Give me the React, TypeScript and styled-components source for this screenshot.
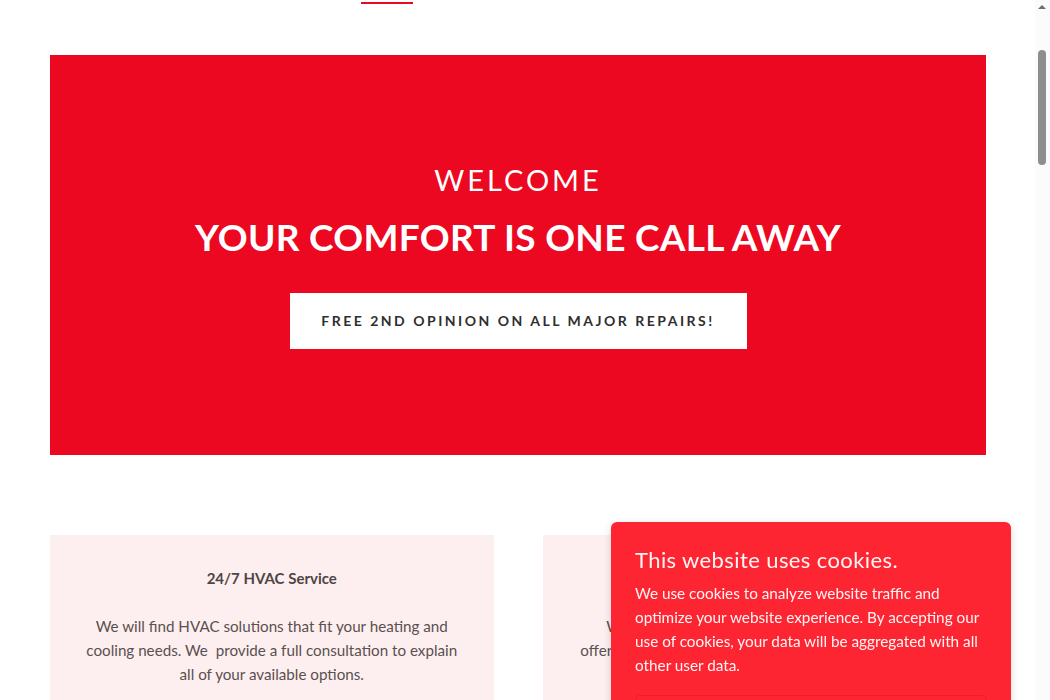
import React, { useLayoutEffect } from "react";
import styled, { createGlobalStyle } from "styled-components";

const Global = createGlobalStyle`
  html, body { margin: 0; padding: 0; background: #ffffff; }
  body { font-family: Lato, "Open Sans", sans-serif; color: #4a4040; padding-right: 15px; }
  * { box-sizing: border-box; }
`;

const ScrollTrack = styled.div`
  position: fixed;
  top: 0;
  right: 0;
  width: 15px;
  height: 100vh;
  background: #fbfbfb;
  z-index: 20;
`;

const ScrollArrow = styled.div`
  position: absolute;
  top: 5px;
  left: 3px;
  width: 0;
  height: 0;
  border-left: 4px solid transparent;
  border-right: 4px solid transparent;
  border-bottom: 4px solid #6e6e6e;
`;

const ScrollThumb = styled.div`
  position: absolute;
  top: 50px;
  left: 3px;
  width: 8px;
  height: 115px;
  border-radius: 4px;
  background: #8e8e8e;
`;

const Header = styled.header`
  height: 217px;
  display: flex;
  flex-direction: column;
  align-items: center;
  justify-content: flex-end;
  gap: 40px;
`;

const Logo = styled.div`
  font-size: 30px;
  font-weight: 700;
  color: #ec0820;
  letter-spacing: 2px;
`;

const Nav = styled.nav`
  display: flex;
  gap: 30px;
  margin-left: -15px;
`;

const NavItem = styled.a<{ $active?: boolean }>`
  font-size: 14px;
  color: #4a4040;
  text-decoration: none;
  padding-bottom: 10px;
  width: 52px;
  text-align: center;
  border-bottom: 2px solid ${(p) => (p.$active ? "#ec0820" : "transparent")};
`;

const Main = styled.main`
  padding: 51px 49px 0 50px;
  display: flex;
  flex-direction: column;
  gap: 80px;
`;

const Hero = styled.section`
  background: #ec0820;
  height: 400px;
  display: flex;
  flex-direction: column;
  align-items: center;
  justify-content: center;
  color: #ffffff;
`;

const Eyebrow = styled.h2`
  margin: 0;
  font-size: 29px;
  font-weight: 400;
  letter-spacing: 3px;
  line-height: 36px;
`;

const Title = styled.h1`
  margin: 15px 0 0;
  font-size: 37px;
  font-weight: 700;
  line-height: 48px;
  letter-spacing: 0.3px;
`;

const CtaButton = styled.button`
  margin-top: 32px;
  width: 457px;
  height: 56px;
  background: #ffffff;
  border: none;
  font-family: Lato, "Open Sans", sans-serif;
  font-size: 14px;
  font-weight: 700;
  letter-spacing: 2.5px;
  color: #2f2f2f;
  text-transform: uppercase;
`;

const Cards = styled.section`
  display: grid;
  grid-template-columns: 1fr 1fr;
  gap: 49px;
`;

const Card = styled.div`
  background: #fdefef;
  padding: 33px 34px 40px;
  text-align: center;
  min-height: 260px;
`;

const CardTitle = styled.h3`
  margin: 0 0 26px;
  font-size: 15px;
  font-weight: 700;
  color: #4f4545;
  line-height: 20px;
`;

const CardText = styled.p`
  margin: 0;
  font-size: 15.2px;
  line-height: 24px;
  color: #5a5050;
`;

const Filler = styled.section`
  min-height: 3000px;
  padding: 40px 0;
  text-align: center;
  font-size: 16px;
  color: #5a5050;
`;

const Cookie = styled.div`
  position: fixed;
  top: 522px;
  right: 39px;
  width: 400px;
  background: #fd2532;
  border-radius: 6px;
  padding: 24px 24px 24px;
  color: #ffffff;
  box-shadow: 0 2px 8px rgba(0, 0, 0, 0.15);
  z-index: 10;
`;

const CookieTitle = styled.h4`
  margin: 0;
  font-size: 22px;
  font-weight: 400;
  letter-spacing: 0.4px;
  line-height: 28px;
  color: #fff4f4;
`;

const CookieText = styled.p`
  margin: 7px 0 0;
  font-size: 15.3px;
  line-height: 24px;
  color: #fff4f4;
`;

const CookieButtons = styled.div`
  margin-top: 18px;
  display: flex;
  flex-direction: column;
  gap: 10px;
`;

const CookieButton = styled.button`
  height: 44px;
  border: 1px solid #f01e2b;
  border-radius: 4px;
  background: #fd2532;
  color: #ffffff;
  font-family: Lato, "Open Sans", sans-serif;
  font-size: 14px;
  font-weight: 700;
  letter-spacing: 2px;
`;

export default function App() {
  useLayoutEffect(() => {
    window.scrollTo(0, 213);
  }, []);
  return (
    <>
      <Global />
      <Header>
        <Logo>Comfort HVAC</Logo>
        <Nav>
          <NavItem $active>Home</NavItem>
          <NavItem>About</NavItem>
          <NavItem>Services</NavItem>
          <NavItem>Contact</NavItem>
        </Nav>
      </Header>
      <Main>
        <Hero>
          <Eyebrow>WELCOME</Eyebrow>
          <Title>YOUR COMFORT IS ONE CALL AWAY</Title>
          <CtaButton>Free 2nd opinion on all major repairs!</CtaButton>
        </Hero>
        <Cards>
          <Card>
            <CardTitle>24/7 HVAC Service</CardTitle>
            <CardText>
              We will find HVAC solutions that fit your heating and cooling needs. We&nbsp; provide a full
              consultation to explain all of your available options.
            </CardText>
          </Card>
          <Card>
            <CardTitle>Maintenance Plans</CardTitle>
            <CardText>
              We service, repair and install all equipment, and
              <br />
              offer affordable maintenance plans to keep your system running efficiently all year long.
            </CardText>
          </Card>
        </Cards>
        <Filler>Serving our community with reliable heating and cooling.</Filler>
      </Main>
      <Cookie>
        <CookieTitle>This website uses cookies.</CookieTitle>
        <CookieText>
          We use cookies to analyze website traffic and optimize your website experience. By accepting our
          use of cookies, your data will be aggregated with all other user data.
        </CookieText>
        <CookieButtons>
          <CookieButton>ACCEPT</CookieButton>
        </CookieButtons>
      </Cookie>
      <ScrollTrack>
        <ScrollArrow />
        <ScrollThumb />
      </ScrollTrack>
    </>
  );
}
